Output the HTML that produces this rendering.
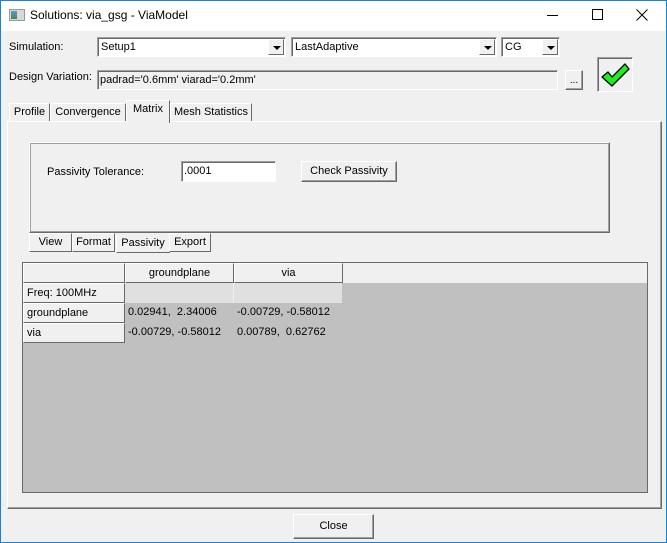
<!DOCTYPE html>
<html><head><style>
*{box-sizing:border-box;margin:0;padding:0}
body{width:667px;height:543px;overflow:hidden;background:#f0f0f0;font-family:"Liberation Sans",sans-serif;font-size:11px;color:#000;position:relative}
.a{position:absolute}
.win{left:0;top:0;width:667px;height:543px;border:1px solid #1a82d6}
.title{left:1px;top:1px;width:665px;height:30px;background:#fff}
.sunk{border:1px solid;border-color:#a0a0a0 #fff #fff #a0a0a0;box-shadow:inset 1px 1px 0 #696969}
.rais{background:#f0f0f0;border:1px solid;border-color:#fff #696969 #696969 #fff;box-shadow:inset -1px -1px 0 #a0a0a0}
.drop{position:absolute;right:1px;top:1px;width:16px;bottom:1px;background:#f0f0f0;border:1px solid;border-color:#fff #696969 #696969 #fff}
.drop:after{content:"";position:absolute;left:4px;top:6px;border-left:4px solid transparent;border-right:4px solid transparent;border-top:4px solid #000}
.tab{position:absolute;background:#f0f0f0;border:1px solid;border-color:#fff #696969 transparent #fff;border-bottom:none;text-align:center;font-size:11px}
.cell{position:absolute;height:20px;line-height:18px;padding-left:3px;font-size:11px;white-space:nowrap}
.hd{background:#f0f0f0;border:1px solid;border-color:#fff #696969 #696969 #fff;text-align:center;padding:0}
.rh{background:#f0f0f0;border:1px solid;border-color:#fff #696969 #696969 #fff}
</style></head><body>
<div class="a win"></div>
<div class="a title"></div>
<div class="a" style="left:9px;top:9px;width:16px;height:12px;background:#d8d8d8;border:1px solid #999"></div>
<div class="a" style="left:11px;top:11px;width:6px;height:8px;background:linear-gradient(#5a9ac8,#3c8a5a)"></div>
<div class="a" style="left:30px;top:8px;font-size:12px">Solutions: via_gsg - ViaModel</div>
<div class="a" style="left:547px;top:15px;width:11px;height:1px;background:#000"></div>
<div class="a" style="left:592px;top:9px;width:11px;height:11px;border:1px solid #000"></div>
<svg class="a" style="left:636px;top:9px" width="12" height="12" viewBox="0 0 12 12"><path d="M0.5 0.5 L11.5 11.5 M11.5 0.5 L0.5 11.5" stroke="#000" stroke-width="1"/></svg>

<div class="a" style="left:9px;top:41px">Simulation:</div>
<div class="a sunk" style="left:97px;top:37px;width:189px;height:20px;background:#fff"><span class="a" style="left:3px;top:3px">Setup1</span><div class="drop"></div></div>
<div class="a sunk" style="left:291px;top:37px;width:206px;height:20px;background:#fff"><span class="a" style="left:3px;top:3px">LastAdaptive</span><div class="drop"></div></div>
<div class="a sunk" style="left:501px;top:37px;width:59px;height:20px;background:#fff"><span class="a" style="left:3px;top:3px">CG</span><div class="drop"></div></div>

<div class="a" style="left:9px;top:71px">Design Variation:</div>
<div class="a sunk" style="left:97px;top:70px;width:461px;height:20px;background:#f0f0f0"><span class="a" style="left:2px;top:3px">padrad='0.6mm' viarad='0.2mm'</span></div>
<div class="a rais" style="left:565px;top:70px;width:18px;height:20px;text-align:center;line-height:20px;font-size:10px">...</div>
<div class="a" style="left:597px;top:57px;width:36px;height:35px;border:1px solid;border-color:#a0a0a0 #fff #fff #a0a0a0;box-shadow:inset 1px 1px 0 #696969">
<svg width="34" height="33" viewBox="0 0 34 33" style="position:absolute;left:0;top:0"><path d="M4 19 L10 14 L14 19 L27 6 L31 11 L14 28 Z" fill="#1cf01c" stroke="#000" stroke-width="1.3" stroke-linejoin="round"/></svg></div>

<div class="a" style="left:7px;top:121px;width:655px;height:388px;border:1px solid;border-color:#fff #696969 #696969 #fff;box-shadow:inset -1px -1px 0 #a0a0a0"></div>
<div class="tab" style="left:9px;top:103px;width:41px;height:18px;line-height:17px">Profile</div>
<div class="tab" style="left:50px;top:103px;width:76px;height:18px;line-height:17px">Convergence</div>
<div class="tab" style="left:170px;top:103px;width:82px;height:18px;line-height:17px">Mesh Statistics</div>
<div class="tab" style="left:126px;top:100px;width:44px;height:23px;line-height:17px;border-bottom:none">Matrix</div>

<div class="a" style="left:29px;top:142px;width:581px;height:91px;border:1px solid;border-color:#fff #696969 #696969 #fff;box-shadow:inset -1px -1px 0 #a0a0a0,inset 1px 1px 0 #a0a0a0"></div>
<div class="a" style="left:47px;top:166px">Passivity Tolerance:</div>
<div class="a sunk" style="left:181px;top:161px;width:95px;height:21px;background:#fff"><span class="a" style="left:2px;top:3px">.0001</span></div>
<div class="a rais" style="left:301px;top:161px;width:96px;height:21px;text-align:center;line-height:19px">Check Passivity</div>

<div class="tab" style="left:29px;top:233px;width:43px;height:19px;line-height:17px;border-bottom:1px solid #696969">View</div>
<div class="tab" style="left:72px;top:233px;width:43px;height:19px;line-height:17px;border-bottom:1px solid #696969">Format</div>
<div class="tab" style="left:116px;top:235px;width:54px;height:18px;line-height:17px;border-top:none;border-bottom:1px solid #696969">Passivity</div>
<div class="tab" style="left:169px;top:233px;width:42px;height:19px;line-height:17px;border-bottom:1px solid #696969">Export</div>

<div class="a" style="left:22px;top:262px;width:626px;height:231px;background:#c0c0c0;border:1px solid #696969"></div>
<div class="a" style="left:23px;top:263px;width:624px;height:20px;background:#f0f0f0"></div>
<div class="cell hd" style="left:23px;top:263px;width:102px"></div>
<div class="cell hd" style="left:125px;top:263px;width:109px">groundplane</div>
<div class="cell hd" style="left:234px;top:263px;width:109px">via</div>
<div class="cell rh" style="left:23px;top:283px;width:102px">Freq: 100MHz</div>
<div class="a" style="left:125px;top:283px;width:218px;height:20px;background:#e0e0e0;border-right:1px solid #c0c0c0"></div>
<div class="a" style="left:233px;top:283px;width:1px;height:20px;background:#f0f0f0"></div>
<div class="cell rh" style="left:23px;top:303px;width:102px">groundplane</div>
<div class="cell" style="left:125px;top:303px">0.02941,&nbsp; 2.34006</div>
<div class="cell" style="left:234px;top:303px">-0.00729, -0.58012</div>
<div class="cell rh" style="left:23px;top:323px;width:102px">via</div>
<div class="cell" style="left:125px;top:323px">-0.00729, -0.58012</div>
<div class="cell" style="left:234px;top:323px">0.00789,&nbsp; 0.62762</div>

<div class="a rais" style="left:293px;top:514px;width:81px;height:25px;text-align:center;line-height:23px">Close</div>
</body></html>
